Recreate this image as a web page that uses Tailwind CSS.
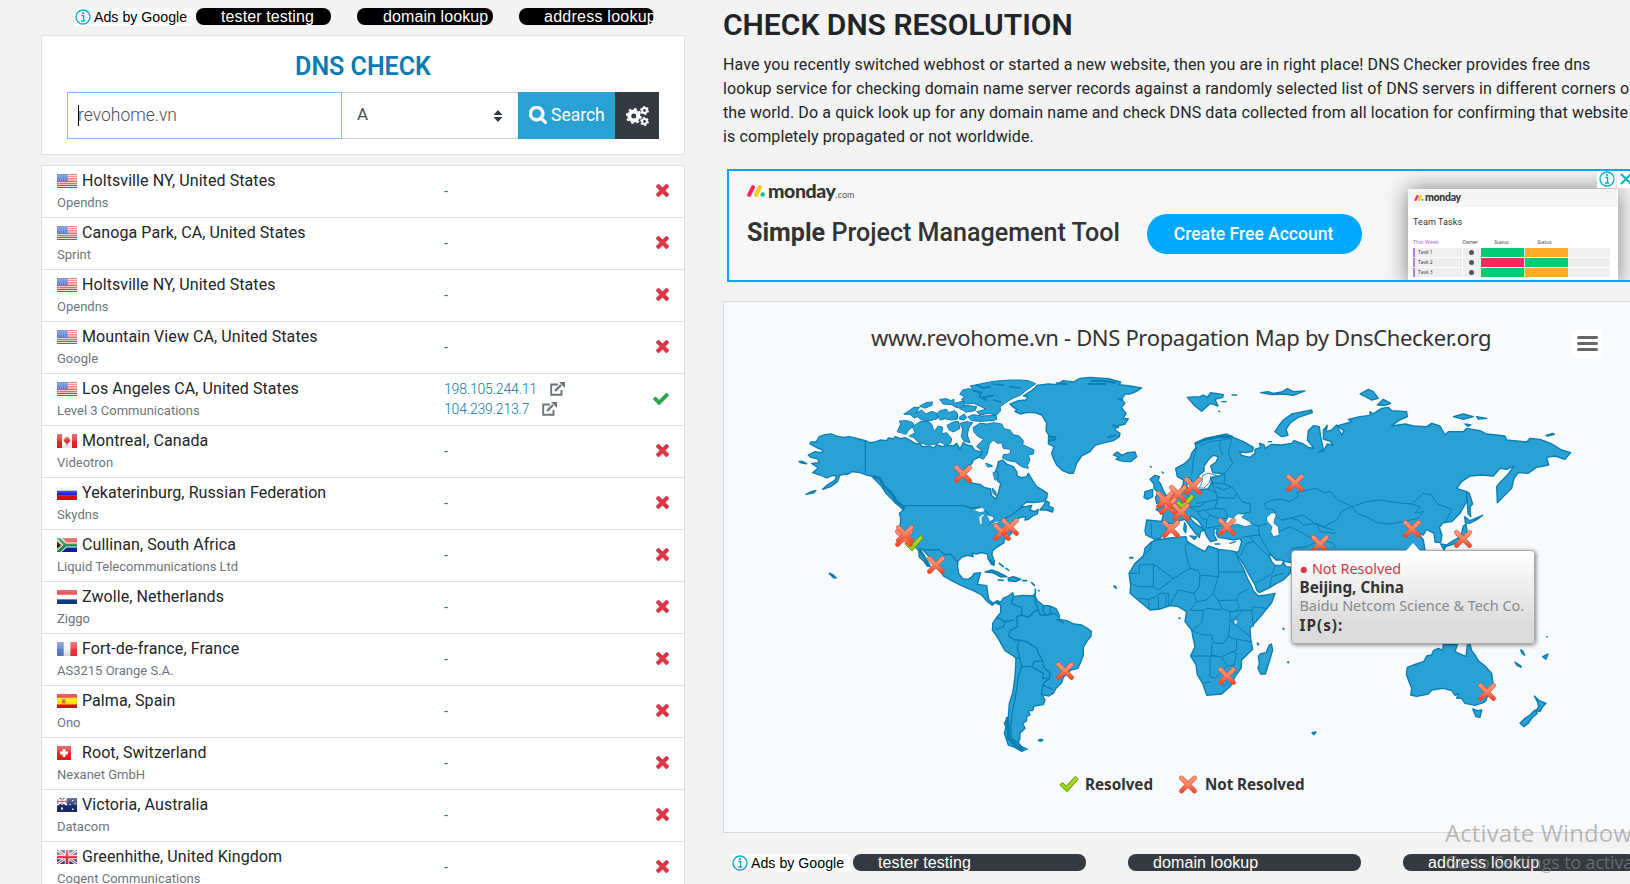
<!DOCTYPE html>
<html lang="en">
<head>
<meta charset="utf-8">
<title>DNS Check</title>
<script src="https://cdn.jsdelivr.net/npm/@tailwindcss/browser@4"></script>
</head>
<body class="relative h-[884px] w-[1630px] overflow-hidden bg-[#f3f3f3] font-['Roboto',sans-serif] text-[#212529]">
<svg class="absolute h-0 w-0">
  <defs>
    <linearGradient id="gx" gradientUnits="userSpaceOnUse" x1="0" y1="-8" x2="0" y2="8"><stop offset="0" stop-color="#ff9a78"/><stop offset=".5" stop-color="#fd8060"/><stop offset="1" stop-color="#ee4526"/></linearGradient>
    <linearGradient id="gc" x1="0" y1="0" x2="0" y2="1"><stop offset="0" stop-color="#b5d52a"/><stop offset="1" stop-color="#8fd400"/></linearGradient>
    <linearGradient id="shine" x1="0" y1="0" x2="0" y2="1"><stop offset="0" stop-color="#fff" stop-opacity=".35"/><stop offset=".5" stop-color="#fff" stop-opacity=".1"/><stop offset=".55" stop-color="#000" stop-opacity="0"/><stop offset="1" stop-color="#000" stop-opacity=".12"/></linearGradient>
  </defs>
  <symbol id="times" viewBox="302 238 1188 1188"><path fill="currentColor" d="M1490 1322q0 40-28 68l-136 136q-28 28-68 28t-68-28l-294-294-294 294q-28 28-68 28t-68-28l-136-136q-28-28-28-68t28-68l294-294-294-294q-28-28-28-68t28-68l136-136q28-28 68-28t68 28l294 294 294-294q28-28 68-28t68 28l136 136q28 28 28 68t-28 68l-294 294 294 294q28 28 28 68z" transform="translate(0 -128)"/></symbol>
  <symbol id="tick" viewBox="121 334 1550 1188"><path fill="currentColor" d="M1671 566q0 40-28 68l-724 724-136 136q-28 28-68 28t-68-28l-136-136-362-362q-28-28-28-68t28-68l136-136q28-28 68-28t68 28l294 295 656-657q28-28 68-28t68 28l136 136q28 28 28 68z"/></symbol>
  <symbol id="search" viewBox="64 128 1664 1664"><path fill="currentColor" d="M1216 832q0-185-131.500-316.500t-316.500-131.500-316.500 131.500-131.500 316.500 131.500 316.500 316.500 131.500 316.500-131.500 131.500-316.500zm512 832q0 52-38 90t-90 38q-54 0-90-38l-343-342q-179 124-399 124-143 0-273.500-55.500t-225-150-150-225-55.500-273.500 55.500-273.500 150-225 225-150 273.500-55.500 273.500 55.500 225 150 150 225 55.500 273.500q0 220-124 399l343 343q37 37 37 90z" stroke="currentColor" stroke-width="60"/></symbol>
  <symbol id="ext" viewBox="0 0 15 14"><path d="M8 2.500H1.200v10.300h10.300V8" fill="none" stroke="currentColor" stroke-width="1.900"/><path d="M5 9l6-6" stroke="currentColor" stroke-width="2.400"/><path d="M9 0h6v6z" fill="currentColor"/></symbol>
  <symbol id="cogs" viewBox="0 0 23 20"><g fill="none" stroke="currentColor"><circle cx="7.800" cy="10" r="4.500" stroke-width="4"/><circle cx="7.800" cy="10" r="7" stroke-width="2" stroke-dasharray="2.750 2.750"/><circle cx="18.500" cy="4.500" r="2.400" stroke-width="2"/><circle cx="18.500" cy="4.500" r="3.800" stroke-width="1.300" stroke-dasharray="1.990 1.990"/><circle cx="18.500" cy="15.500" r="2.400" stroke-width="2"/><circle cx="18.500" cy="15.500" r="3.800" stroke-width="1.300" stroke-dasharray="1.990 1.990"/></g></symbol>
  <symbol id="info" viewBox="0 0 16 16"><circle cx="8" cy="8" r="7" fill="#fff" stroke="#00aecd" stroke-width="1.300"/><path d="M6.200 6.500H8.600V12M6 12h4.300" stroke="#00aecd" stroke-width="1.300" fill="none"/><rect x="7.200" y="3.200" width="1.800" height="1.800" fill="#00aecd"/></symbol>
  <symbol id="mx" viewBox="-9 -9 18 18"><path d="M-6.500-6.500L6.500 6.500M6.500-6.500L-6.500 6.500" stroke="#d9523a" stroke-width="4.600" stroke-linecap="round"/><path d="M-6.500-6.500L6.500 6.500M6.500-6.500L-6.500 6.500" stroke="url(#gx)" stroke-width="3.600" stroke-linecap="round"/></symbol>
  <symbol id="mc" viewBox="0 0 20 18"><path d="M.8 10L3.300 7.500 7.300 11 16.500 1.200 19.200 4 8.200 16.800z" fill="url(#gc)" stroke="#5f9a10" stroke-width="1" stroke-linejoin="round"/></symbol>
  <symbol id="us" viewBox="0 0 20 14"><path fill="#fff" d="M0 0h20v14H0z"/><path stroke="#e8453c" stroke-width="1.150" d="M0 .6h20M0 2.750h20M0 4.900h20M0 7.050h20M0 9.200h20M0 11.350h20M0 13.500h20"/><path fill="#3b63c8" d="M0 0h10.500v7.500H0z"/><path stroke="#c5d4f7" stroke-width=".8" stroke-dasharray="1 1" d="M1 2h9M1.500 4h8M1 6h9"/></symbol>
  <symbol id="ca" viewBox="0 0 20 14"><path fill="#fff" d="M0 0h20v14H0z"/><path fill="#dd2c2c" d="M0 0h5v14H0zM15 0h5v14h-5zM10 2l1 2 1.500-.5-.3 2 1.500-.3-.3 1.500L11 9.500l-.7.200V12h-.6V9.700L9 9.500 6.600 6.700l-.3-1.500 1.500.3-.3-2L9 4z"/></symbol>
  <symbol id="ru" viewBox="0 0 20 14"><path fill="#f6f6f6" d="M0 0h20v5H0z"/><path fill="#1a2be0" d="M0 4.700h20v5H0z"/><path fill="#e3120b" d="M0 9.400h20V14H0z"/></symbol>
  <symbol id="za" viewBox="0 0 20 14"><path fill="#e8392c" d="M0 0h20v7H0z"/><path fill="#101ea8" d="M0 7h20v7H0z"/><path d="M0-1l8.500 8L0 15M8 7h12" stroke="#fff" stroke-width="5" fill="none"/><path d="M0-1l8.500 8L0 15M8 7h12" stroke="#1b8f4c" stroke-width="3" fill="none"/><path fill="#111" stroke="#e9b92e" stroke-width="1" d="M-1 2l5.500 5L-1 12z"/></symbol>
  <symbol id="nl" viewBox="0 0 20 14"><path fill="#e5212a" d="M0 0h20v5H0z"/><path fill="#fff" d="M0 4.700h20v5H0z"/><path fill="#0f3f8c" d="M0 9.400h20V14H0z"/></symbol>
  <symbol id="fr" viewBox="0 0 20 14"><path fill="#5b7fd0" d="M0 0h7v14H0z"/><path fill="#f4f4f4" d="M6.700 0h7v14h-7z"/><path fill="#e83a35" d="M13.400 0H20v14h-6.600z"/></symbol>
  <symbol id="es" viewBox="0 0 20 14"><path fill="#e81313" d="M0 0h20v14H0z"/><path fill="#ffe608" d="M0 3.700h20v6.800H0z"/><path fill="#d9752a" d="M5 5h3.500v4.500H5z"/></symbol>
  <symbol id="ch" viewBox="0 0 20 14"><path fill="#f02020" d="M0 0h14v14H0z"/><path fill="#fff" d="M5.500 3h3v2.500H11v3H8.500V11h-3V8.500H3v-3h2.500z"/></symbol>
  <symbol id="au" viewBox="0 0 20 14"><path fill="#1a2c72" d="M0 0h20v14H0z"/><path d="M0 0l10 7M10 0L0 7M5 0v7M0 3.500h10" stroke="#fff" stroke-width="1.800"/><path d="M5 0v7M0 3.500h10" stroke="#e0303a" stroke-width="1"/><path fill="#fff" d="M4 9.500h2v2H4zM15 2h1.300v1.300H15zM17.500 5h1.200v1.200h-1.200zM12.500 6h1.200v1.200h-1.200zM15 10.500h1.500V12H15z"/></symbol>
  <symbol id="gb" viewBox="0 0 20 14"><path fill="#2a4796" d="M0 0h20v14H0z"/><path d="M0 0l20 14M20 0L0 14" stroke="#fff" stroke-width="3"/><path d="M0 0l20 14M20 0L0 14" stroke="#e0303a" stroke-width="1"/><path d="M10 0v14M0 7h20" stroke="#fff" stroke-width="4.600"/><path d="M10 0v14M0 7h20" stroke="#e0303a" stroke-width="2.600"/></symbol>
</svg>

<div class="flex h-full">
  <!-- Left column -->
  <section class="ml-[41px] w-[644px] shrink-0">
    <div class="ml-[33px] flex h-[35px] pt-2 font-['Liberation_Sans',sans-serif] text-[16px] text-white">
      <div class="mr-[3px] flex h-[18px] w-[119px] items-center rounded-r bg-white pl-px pt-0.5 text-[14.200px] text-black"><svg class="-mt-0.5 mr-[3px] h-4 w-4"><use href="#info"/></svg><span class="whitespace-nowrap">Ads by Google</span></div>
      <div class="mr-[26px] h-[17px] w-[135px] overflow-hidden rounded-lg bg-black pl-[25px] leading-[17px] tracking-[.1px] whitespace-nowrap">tester testing</div>
      <div class="mr-[26px] h-[17px] w-[136px] overflow-hidden rounded-lg bg-black pl-[26px] leading-[17px] tracking-[.1px] whitespace-nowrap">domain lookup</div>
      <div class="h-[17px] w-[135px] rounded-lg bg-black pl-[25px] leading-[17px] tracking-[.25px] whitespace-nowrap">address lookup</div>
    </div>
    <div class="h-[120px] border border-[#dee2e6] bg-white px-[25px] pt-4">
      <h2 class="text-center text-[25px] font-semibold leading-[29px] text-[#0a7cb0]">DNS CHECK</h2>
      <div class="mt-[11px] flex h-[47px] text-[17.500px] font-light text-[#495057]">
        <div class="flex w-[275px] items-center border border-[#80bdff] pl-2.5"><i class="h-[21px] w-px bg-black"></i><span class="-ml-px">revohome.vn</span></div>
        <div class="flex w-[176px] items-center border-y border-[#ced4da] pl-[15px] pr-[15px] text-[17px]"><span class="-mt-px flex-1 font-normal">A</span><svg class="h-3 w-2.5" viewBox="0 0 10 12"><path fill="#343a40" d="M5 0l4.500 5h-9zM5 12L.5 7h9z"/></svg></div>
        <div class="flex w-[97px] items-center bg-[#2aa1d5] pl-[11px] font-normal text-white"><svg class="-mt-0.5 mr-1 h-[18px] w-[18px]"><use href="#search"/></svg><span class="-mt-px">Search</span></div>
        <div class="flex w-11 items-center justify-center bg-[#343a40] text-white"><svg class="h-5 w-[23px]"><use href="#cogs"/></svg></div>
      </div>
    </div>
    <div id="rows" class="mt-2.5 border border-[#dee2e6] bg-white"></div>
  </section>

  <!-- Right column -->
  <section class="relative ml-[38px] w-[907px] shrink-0">
    <h1 class="mt-1 h-[42px] whitespace-nowrap text-[30px] font-semibold leading-[42px]">CHECK DNS RESOLUTION</h1>
    <p class="mt-[7px] h-[116px] whitespace-nowrap text-[16px] leading-6 tracking-[.107px]">Have you recently switched webhost or started a new website, then you are in right place! DNS Checker provides free dns<br>lookup service for checking domain name server records against a randomly selected list of DNS servers in different corners of<br>the world. Do a quick look up for any domain name and check DNS data collected from all location for confirming that website<br>is completely propagated or not worldwide.</p>

    <div class="relative ml-1 h-[113px] w-[930px] overflow-hidden border-2 border-[#00a8ff] bg-[#f7f7f7] text-[#333]">
      <div class="ml-[18px] mt-2 flex h-6 items-center font-['Lato',sans-serif]">
        <svg class="mr-[3px] h-3 w-[18px]" viewBox="0 0 18 12"><path d="M2.200 9.800L6 2.200" stroke="#fb275d" stroke-width="4" stroke-linecap="round"/><path d="M9 9.800l3.800-7.600" stroke="#fc0" stroke-width="4" stroke-linecap="round"/><circle cx="15.700" cy="9.500" r="2.200" fill="#00ca72"/></svg>
        <span class="-mt-px text-[19.500px] font-black leading-6 tracking-[-.4px]">monday</span><span class="mt-2 text-[9px] leading-3 text-[#555]">.com</span>
      </div>
      <div class="ml-[18px] mt-[9px] whitespace-nowrap text-[25.100px] leading-[42px]"><b class="font-bold">Simple</b> <span class="font-medium">Project Management Tool</span></div>
      <div class="absolute left-[418px] top-[43px] flex h-10 w-[215px] items-center justify-center rounded-full bg-[#00a8ff] pr-0.5 text-[17.500px] font-medium text-white">Create Free Account</div>
      <div class="absolute left-[679px] top-[18px] h-24 w-[210px] bg-white shadow-[0_0_22px_rgba(0,0,0,.5)]">
        <div class="flex h-[18px] items-center bg-[#f5f5f5] pl-1.5">
          <svg class="h-1.5 w-[10px]" viewBox="0 0 18 12"><path d="M2.200 9.800L6 2.200" stroke="#fb275d" stroke-width="4.500" stroke-linecap="round"/><path d="M9 9.800l3.800-7.600" stroke="#fc0" stroke-width="4.500" stroke-linecap="round"/><circle cx="15.700" cy="9.500" r="2.200" fill="#00ca72"/></svg>
          <b class="-mt-0.5 ml-px font-['Lato',sans-serif] text-[10.500px] font-black leading-3 tracking-[-.3px]">monday</b></div>
        <div class="ml-[5px] mt-[7px] text-[9px] leading-4 tracking-[.1px]">Team Tasks</div>
        <div class="ml-[5px] mt-2 grid h-[9px] grid-cols-[47px_20px_43px_43px] text-center font-['Open_Sans',sans-serif] text-[5px] leading-[9px]"><span class="text-left text-[5.500px] text-[#a25ddc]">This Week</span><span>Owner</span><span>Status</span><span>Status</span></div>
        <div id="tasks" class="ml-[5px] mt-px flex w-[197px] flex-col gap-px font-['Open_Sans',sans-serif]"></div>
      </div>
      <div class="absolute right-[6px] -top-px flex h-[18px] w-[52px] gap-px"><span class="flex w-[19px] items-center justify-center bg-white"><svg class="h-4 w-4"><use href="#info"/></svg></span><span class="flex flex-1 items-center bg-white pl-[3px]"><svg class="h-3 w-3" viewBox="0 0 12 12"><path d="M1 1l10 10M11 1L1 11" stroke="#00aecd" stroke-width="2"/></svg></span></div>
    </div>

    <div class="relative mt-[19px] h-[532px] w-[930px] border border-[#d6dade] bg-[#f9fafc]">
      <div class="ml-[147px] mt-[19px] whitespace-nowrap font-['Noto_Sans',sans-serif] text-[22px] leading-8 tracking-[-.33px] text-[#333]">www.revohome.vn - DNS Propagation Map by DnsChecker.org</div>
      <div class="absolute left-[848px] top-[28px] flex h-[27px] w-[30px] flex-col items-center justify-center gap-[3px] rounded-sm bg-white"><i class="h-[3px] w-[21px] rounded bg-[#666]"></i><i class="h-[3px] w-[21px] rounded bg-[#666]"></i><i class="h-[3px] w-[21px] rounded bg-[#666]"></i></div>
      <div class="absolute left-[335px] top-[472px] flex items-center whitespace-nowrap font-['Noto_Sans',sans-serif] text-[15.200px] font-bold leading-5 text-[#333]"><svg class="mr-1.5 h-[18px] w-5"><use href="#mc"/></svg>Resolved<svg class="ml-[26px] mr-2 h-[19px] w-[18px]"><use href="#mx"/></svg><span class="-tracking-[.08px]">Not Resolved</span></div>
    </div>
    <div class="ml-2 mt-[21px] flex font-['Liberation_Sans',sans-serif] text-[16px] text-white">
      <div class="mr-[3px] flex h-[18px] w-[119px] shrink-0 items-center rounded-r bg-white pl-px pt-0.5 text-[14.200px] text-black"><svg class="-mt-0.5 mr-[3px] h-4 w-4"><use href="#info"/></svg><span class="whitespace-nowrap">Ads by Google</span></div>
      <div class="mr-[42px] h-[17px] w-[233px] shrink-0 rounded-lg bg-[#343a40] pl-[25px] leading-[17px] tracking-[.1px]">tester testing</div>
      <div class="mr-[42px] h-[17px] w-[233px] shrink-0 rounded-lg bg-[#343a40] pl-[25px] leading-[17px] tracking-[.1px]">domain lookup</div>
      <div class="h-[17px] w-[233px] shrink-0 rounded-lg bg-[#343a40] pl-[25px] leading-[17px] tracking-[.2px]">address lookup</div>
    </div>
  </section>
</div>

<!-- World map: units are thirds of a pixel -->
<svg class="absolute left-[780px] top-[320px] h-[450px] w-[850px]" viewBox="0 0 2550 1350" fill="#2aa1d5" stroke="#0a7db3" stroke-width="4" stroke-linejoin="round" stroke-linecap="round">
  <path d="M118 350L135 344 155 342 172 349 190 352 208 350 230 355 257 362 268 368 285 366 300 360 320 362 325 354 340 357 345 350 362 356 375 353 392 362 408 372 420 370 428 380 450 378 462 384 470 374 485 380 500 376 520 378 530 370 540 387 550 368 560 375 575 378 585 392 605 395 600 410 580 420 575 432 560 440 548 460 556 478 580 490 600 493 612 502 632 507 634 525 646 537 655 520 662 490 652 482 656 465 646 455 652 440 655 425 668 420 680 432 700 440 710 455 712 468 725 473 740 470 745 460 758 482 770 500 790 512 802 520 800 535 788 545 760 548 740 546 722 560 735 560 755 556 750 570 765 575 775 568 772 582 758 588 745 598 735 600 737 590 722 592 705 600 695 612 690 620 695 640 672 660 672 668 650 682 637 693 636 705 643 722 642 735 634 733 624 715 622 702 605 698 590 702 575 700 580 710 562 706 545 712 533 725 533 740 536 760 548 776 565 778 578 768 582 760 602 758 598 772 592 793 620 797 623 818 627 840 640 850 652 842 662 848 660 855 645 848 637 856 622 845 605 825 580 812 565 806 540 795 515 782 490 768 480 752 465 740 452 720 445 708 430 690 420 686 422 700 432 712 440 730 450 740 442 738 430 722 418 712 416 692 405 680 385 670 372 655 360 625 362 595 358 580 370 570 362 562 345 548 330 532 318 520 305 500 288 482 275 468 262 466 240 458 215 455 205 462 190 464 180 465 172 485 152 500 128 508 142 495 165 480 170 468 158 466 140 474 120 465 98 458 115 444 95 430 118 428 112 416 92 412 85 405 105 395 125 398 128 390 115 385 90 372 92 366 108 366z"/>
  <path d="M78 523l18-9 12-3-8 8z"/>
  <g stroke-width="3">
  <path d="M540 222L548 210 565 206 580 208 570 198 600 192 640 184 690 180 720 180 745 182 767 191 758 198 740 210 722 225 700 234 680 246 660 260 662 272 650 285 625 280 600 285 590 275 618 268 600 258 580 250 560 252 545 240 552 230z"/>
  <path d="M590 196l20 8 20-4M640 192l30 4M580 212l24 6-6 12 22 10M610 232l30-6M640 240l22 6M690 200l30 4" fill="none" stroke-width="5"/>
  <path d="M565 290L580 284 605 288 648 286 650 298 640 302 600 304 575 302z"/>
  <path d="M352 334L362 312 358 303 380 302 398 308 402 316 386 330 378 342z"/>
  <path d="M398 320L420 305 445 304 455 312 462 335 475 318 488 322 485 342 500 338 515 356 512 370 498 376 482 366 468 372 440 374 415 366 400 352 388 348 405 338z"/>
  <path d="M372 282L390 270 402 262 418 262 408 280 424 270 438 282 455 274 480 284 472 296 450 302 425 300 412 290 402 294 392 284z"/>
  <path d="M420 258L438 248 457 246 456 256 436 264z"/>
  <path d="M480 238L500 236 512 242 522 238 522 250 548 244 555 252 552 266 528 262 515 254 490 252z"/>
  <path d="M470 282L480 272 500 268 505 278 525 272 533 282 532 297 515 300 495 296 482 300z"/>
  <path d="M540 290L552 282 560 292 552 300 540 298z"/>
  <path d="M502 315L520 306 535 304 540 325 520 336 508 330z"/>
  <path d="M540 310L560 305 578 308 566 325 562 345 570 368 552 364 544 350 548 328z"/>
  <path d="M540 265L560 256 590 260 585 272 560 276z"/>
  <path d="M580 322L600 310 622 312 640 308 665 312 672 326 690 330 700 344 718 348 730 362 728 374 745 382 762 390 760 402 745 405 750 420 742 436 745 445 725 440 705 425 685 422 668 414 670 404 690 402 692 388 670 385 665 368 652 370 640 360 628 372 622 400 610 418 598 412 610 395 590 380 600 368 612 358 595 350 583 338z"/>
  <path d="M618 430l12 4 8 5-14 2zM640 458l12-4 4 18-10 8zM638 505l10 12 0 10-8-6z"/>
  </g>
  <path d="M797 542L808 548 806 558 820 564 818 576 800 570 780 570 790 558z"/>
  <path d="M58 425l10 0 12 6-14-2zM148 760l10 4 10 10-8-2z" stroke-width="5"/>
  <path d="M282 470L300 476 312 500 335 520 350 545 372 562" fill="none" stroke-width="9"/>
  <path d="M420 690L448 736" fill="none" stroke-width="8"/>
  <path d="M256 362V457M370 557H550L572 564 600 562 625 580 640 612 668 598 695 585 712 572 728 560M418 688L455 690 475 688 495 705 512 702 533 728" fill="none"/>
  <g fill="#f9fafc" stroke-width="2"><path d="M568 576L590 566 608 562 616 574 600 578 585 572zM600 614L596 592 608 582 616 584 606 592 606 612zM618 584L640 590 642 598 628 606 626 596zM624 614L650 604 664 600 650 610z"/></g>
  <path d="M690 252L715 242 738 240 742 230 730 228 750 215 767 202 770 196 805 192 830 194 850 182 880 186 900 175 930 172 985 176 1022 186 1018 194 1050 198 1085 204 1068 215 1050 222 1035 222 1025 238 1035 250 1024 262 1038 280 1030 295 1045 296 1035 312 1012 318 1005 330 1020 340 1018 350 1000 362 965 370 945 376 930 395 905 408 890 430 880 460 868 460 848 452 830 435 820 415 815 400 822 380 805 372 806 345 798 332 800 310 785 285 765 278 740 278 720 282 705 274 712 268 700 262z"/>
  <path d="M935 182h30l40 6M925 192h50M1000 316l15 6M1015 236l12 4M985 352l20-6M806 350l20 2M808 362l18-4M830 190l30 2" fill="none" stroke-width="6"/>
  <!-- Caribbean -->
  <g transform="translate(540 720)">
  <path d="M76 36L95 30 112 36 140 50 122 50 100 38zM145 55L160 50 182 58 168 64 146 62zM115 60l14 1M188 62h12M118 10l12 10M92 0l10 14M138 25l8 6M215 68l8 8M226 88v14M236 92h1M222 104l4-1M240 538l8 2-4 3-8-1zM462 78l4 3" stroke-width="5"/>
  <!-- South America -->
  <path d="M112 126L124 124 130 114 145 108 158 98 162 110 185 106 225 108 232 122 250 136 270 138 288 146 298 165 298 178 320 182 342 192 365 195 382 205 394 214 393 228 380 245 370 262 370 285 365 300 354 325 332 330 310 352 305 368 288 385 280 400 266 408 246 404 255 420 250 434 222 438 218 452 205 452 210 465 200 470 200 482 188 490 195 505 180 520 180 535 175 548 185 560 202 567 185 574 160 560 145 555 133 520 138 500 133 490 145 470 148 430 158 400 165 350 168 295 160 288 135 272 120 245 108 225 97 210 98 200 98 190 110 172 122 158 122 135z"/>
  <path d="M160 108L154 130 172 138 185 142 185 165 170 170 172 200M225 108L225 125 235 148 222 155 205 172 185 165M235 148L240 165 262 165 280 160 290 165M250 138L248 150 255 163M272 140L270 160M110 172L135 185 160 180M135 185L130 200 108 208M172 200L150 212 146 230 165 240 178 240 200 245 230 265 235 280 248 302 250 320 270 340 270 355 250 370 244 404M178 240L172 262 178 290 168 298M178 290L185 320 215 320 222 305 248 302M215 320L250 340 248 355 270 355M185 320L175 350 168 400 158 450 152 500 155 535 175 550M250 375L276 388M290 178L310 188" fill="none"/>
  <path d="M142 475l4 60 20 20 20 12" fill="none" stroke-width="10"/>
  </g>
  <g transform="translate(930 120)">
  <!-- Eurasia -->
  <path d="M257 325L285 310 300 295 306 278 318 262 315 250 335 244 355 235 385 227 410 222 430 232 460 245 490 262 487 274 470 278 448 276 455 286 480 292 495 280 495 268 512 262 508 250 522 254 525 265 545 253 575 255 605 250 612 242 640 252 655 262 672 265 652 240 655 212 670 197 688 200 692 230 698 258 700 268 685 276 700 273 712 252 730 255 720 243 700 237 700 210 712 196 708 215 725 210 740 195 755 225 762 212 742 198 785 185 775 178 810 170 840 166 840 155 848 162 875 145 895 142 905 152 950 155 952 170 925 182 905 198 945 192 970 198 1010 200 1025 190 1050 198 1065 225 1075 215 1120 215 1130 205 1170 212 1190 222 1245 228 1250 240 1310 246 1320 235 1350 238 1382 250 1415 270 1442 278 1425 298 1395 288 1370 292 1376 315 1340 322 1315 340 1285 338 1272 355 1265 385 1235 415 1222 428 1220 380 1232 365 1255 342 1272 318 1250 328 1230 325 1210 348 1175 345 1140 348 1115 365 1100 385 1130 395 1130 425 1110 460 1085 485 1060 488 1048 502 1056 525 1052 548 1035 546 1032 520 1010 508 1000 525 985 520 1000 540 1005 570 1000 620 800 700 640 640 604 608 585 605 572 600 558 600 540 582 538 588 545 605 555 616 575 616 580 606 588 620 605 622 600 640 580 660 560 670 540 682 508 698 500 690 495 675 475 640 460 612 438 580 447 572 455 545 450 536 430 540 405 535 385 532 378 518 384 505 372 508 372 525 380 540 362 545 350 528 340 505 325 482 305 468 300 474 315 490 345 510 332 514 328 532 318 522 300 498 285 478 268 482 250 492 232 488 228 515 210 535 195 538 168 525 165 512 170 480 215 484 220 462 198 448 218 440 240 425 250 405 268 395 280 372 280 360 290 365 292 385 330 390 355 386 365 368 362 355 405 342 368 338 362 318 378 306 385 290 370 286 358 296 342 318 342 334 327 345 322 370 310 378 300 352 280 360 262 350z"/>
  <path d="M318 250L345 238 385 230 425 230" fill="none" stroke-width="9"/>
  <g fill="#f9fafc" stroke-width="2.500"><path d="M408 484L414 470 430 474 440 462 466 460 456 472 475 482 490 494 465 500 440 492 420 498 408 498zM530 472L545 458 562 460 555 475 552 490 565 500 568 526 550 530 542 515 546 500 532 485zM338 346L356 340 380 346 362 352 358 368 342 384 328 384 336 366z"/></g>
  <path d="M320 262L310 300 305 345M330 258L360 245 395 240 425 236M392 240L388 260 398 285M425 236L415 280 428 310 405 338M362 368L405 372M362 350L370 380 378 398 382 420 350 425 320 430M405 342L402 372 425 380 440 400 432 415 382 412M355 388L378 398M425 380L400 390 378 380M440 400L455 425 480 432 482 455 455 462M382 420L375 445 405 448 412 470M350 425L330 440 300 440 298 420 290 395M300 440L320 455 345 450 375 445M325 458L335 475 350 480 360 465 345 450M360 465L385 475 412 475M350 480L348 505 378 500 408 490M300 440L280 450 262 440M215 484L240 492M183 490L185 528M482 490L505 498 508 525 480 528 455 532M505 498L530 492M508 525L525 555 540 582M480 528L490 545 470 550 452 585M490 545L520 575 538 588M555 616L548 640 500 668M580 640L545 650 540 680M525 430L545 420 575 418 600 425 625 408 620 398 675 385 705 398 720 395 745 420 785 440 755 455 740 480 700 500 680 490 640 495 625 480 600 475 575 480 560 470 552 450 530 445zM568 515L600 500 640 520 680 545 650 560 605 565M680 490L690 515 735 520M785 440L830 425 870 420 900 425 940 430 965 432 990 440 975 460 1000 455 985 475 940 485 900 492 860 488 830 470 805 462 785 440M965 432L1000 400 1025 405 1040 430 1085 448 1065 490M575 480L640 465 680 495 730 510M700 540l30 10 5 12" fill="none" stroke-width="3"/>
  <path d="M555 215L566 198 580 180 605 162 640 155 665 150 667 158 625 172 600 190 588 208 594 226 575 230z"/>
  <path d="M292 112L330 110 340 105 352 112 362 98 400 104 398 112 375 118 384 138 362 130 345 145 335 154 315 138 306 128zM512 98L535 95 550 100 575 96 592 86 610 95 645 93 610 106 580 102 545 104zM426 105h14M395 125h14M386 153l3 2M535 245h10" />
  <path d="M70 285L82 276 96 286 112 278 135 276 140 290 122 305 100 304 78 298 88 292z"/>
  <path d="M180 358L195 346 208 350 204 362 212 372 220 392 232 412 225 428 200 430 196 412 205 398 192 385 192 372zM162 412L165 395 188 388 188 410 172 418zM216 336l4 3M181 319l3 3M284 488l5 12-2 18-6-10zM300 528l20 2-6 8zM375 552h14M420 550l16-5" />
  <path d="M810 102L835 88 850 95 865 115 845 120zM862 135L880 118 902 130 885 136zM1090 170L1120 162 1150 170 1120 178zM1160 170l30 5-25 2zM1125 192l18 3-10 4zM1368 226l20-6 5 3-22 5z"/>
  <path d="M1130 395L1138 400 1148 432 1140 440 1142 470 1134 460zM1124 470L1140 482 1178 466 1155 482 1138 490 1126 488zM1128 492L1132 520 1115 545 1060 562 1085 545 1112 530 1120 498zM1052 552l18 3-8 15z"/>
  <!-- Africa -->
  <path d="M200 540L240 534 288 530 292 545 320 562 345 575 355 558 385 568 420 572 438 576 446 600 460 625 472 655 485 680 492 695 505 708 530 705 555 700 545 728 515 765 480 805 482 835 488 868 455 900 453 925 435 950 422 978 395 1002 350 1006 338 970 322 945 318 915 302 888 315 860 308 828 305 810 285 785 290 755 265 740 240 737 210 747 180 750 150 725 120 700 122 675 117 640 135 610 160 590 165 565 185 545z"/>
  <path d="M185 545L180 570 165 580 140 605M120 640H148V615L190 612 250 655 300 625 292 600 285 560 295 545M190 612V680H145L122 670M190 680L205 690 235 668 250 655M300 625L325 632 330 645 385 650V568M385 636H462M330 645L328 680 312 700 265 690 250 715 240 737M385 650L370 700 385 722 440 720 448 700 478 685M312 700L320 725 300 750M320 725L350 720 370 700M145 715L175 718 195 712 210 700 235 700M175 718L178 745M205 745V710M228 740V705M236 738V702M385 722L395 745 420 755 460 750 485 752 490 740 530 745 545 725M440 720L448 740 440 755M300 750L340 752 350 745 395 750M340 752L335 790 305 812M420 755V790L415 830 400 850 370 850 365 825 340 825 305 812M460 750L430 780M430 780H420L480 830M485 752L490 800M415 830L440 838 482 845M302 888H380L365 885V855M365 885L395 892 425 875 440 870 440 838M395 892L412 918 432 915 440 880 425 875M360 890V950M360 965L340 970 338 970M360 950L375 955 412 918M395 965l12-5 6 10-12 8zM432 915L435 940" fill="none" stroke-width="3"/>
  <path d="M432 780l10 0 0 10-8 4z" fill="#f9fafc" stroke-width="2"/>
  <path d="M505 890L510 882 528 878 538 855 544 852 548 870 538 905 526 942 512 942 504 925 508 910z"/>
  <path d="M120 593h8M75 680l3 4M268 775h1M503 850l2 4M580 806h1M594 907h1" stroke-width="6"/>
  </g>
  <!-- Australia and New Zealand -->
  <g transform="translate(1470 660)">
  <path d="M412 382L430 375 462 364 470 348 485 345 490 332 505 325 518 330 520 314 562 314 555 335 588 350 592 315 600 312 605 332 615 345 625 362 645 378 665 400 669 428 655 460 648 482 640 488 615 496 585 490 575 475 560 475 566 460 555 466 545 452 520 445 485 450 475 462 440 469 422 465 425 445 415 420 409 402z"/>
  <path d="M608 507L622 512 635 510 630 532 618 530zM793 468L808 482 828 490 818 500 810 515 798 512 806 500 802 485zM795 510L802 520 785 535 775 550 762 560 750 550 765 535 780 525zM752 330l6 2 6 14-8-6zM735 366l18 12 0 4-12-6zM818 350l16-8-6 16zM126 578l12-2-6 8zM40 266l1 1M54 367l1 1M830 290l2 1"/>
  </g>
</svg>
<div id="marks"></div>

<!-- Tooltip -->
<div class="absolute left-[1290.500px] top-[550px] h-[94px] w-[244px] rounded-sm border border-[#aaa] bg-linear-to-b from-white to-[#dcdcdc] to-80% pl-2 pt-[9px] font-['Noto_Sans',sans-serif] text-[14.400px] leading-[18.700px] whitespace-nowrap text-[#333] shadow-[1px_1px_4px_rgba(0,0,0,.5)]">
  <svg class="absolute -top-2 left-[113px] h-[9px] w-4" viewBox="0 0 16 9"><path d="M0 9L8 0l8 9" fill="#fff"/></svg>
  <div class="text-[#dc3545]">● Not Resolved</div>
  <div class="-mt-px mb-px text-[15.300px] font-bold">Beijing, China</div>
  <div class="text-[#888]">Baidu Netcom Science &amp; Tech Co.</div>
  <div class="text-[15.300px] font-bold tracking-[1px]">IP(s):</div>
</div>

<!-- Desktop watermark -->
<div class="absolute left-[1445px] top-[815px] whitespace-nowrap font-['Open_Sans',sans-serif] text-[#8e8e8e]/60">
  <div class="text-[24px] leading-9 tracking-[.1px]">Activate Windows</div>
  <div class="mt-px text-[17.600px] leading-5">Go to Settings to activate Windows.</div>
</div>

<script>
const rows = [
  ['us','Holtsville NY, United States','Opendns'],['us','Canoga Park, CA, United States','Sprint'],['us','Holtsville NY, United States','Opendns'],
  ['us','Mountain View CA, United States','Google'],['us','Los Angeles CA, United States','Level 3 Communications',['198.105.244.11','104.239.213.7']],
  ['ca','Montreal, Canada','Videotron'],['ru','Yekaterinburg, Russian Federation','Skydns'],['za','Cullinan, South Africa','Liquid Telecommunications Ltd'],
  ['nl','Zwolle, Netherlands','Ziggo'],['fr','Fort-de-france, France','AS3215 Orange S.A.'],['es','Palma, Spain','Ono'],
  ['ch','Root, Switzerland','Nexanet GmbH'],['au','Victoria, Australia','Datacom'],['gb','Greenhithe, United Kingdom','Cogent Communications']];
document.getElementById('rows').innerHTML = rows.map(([f,t,s,ips]) => `
  <div class="flex h-[52px] items-center border-b border-[#dee2e6] pl-[15px]">
    <div class="w-[387px] shrink-0 self-start pt-[3px]">
      <div class="flex h-6 items-center text-[16px] leading-6 tracking-[.08px]"><svg class="mr-[5px] h-3.5 w-5"><use href="#${f}"/><rect width="${f==='ch'?14:20}" height="14" fill="url(#shine)"/></svg><span class="whitespace-nowrap">${t}</span></div>
      <div class="text-[13px] leading-[19px] text-[#6c757d]">${s}</div>
    </div>
    <div class="-mt-0.5 w-[210px] shrink-0 text-[14px] leading-5 text-[#0a7cb0]">${ips ? ips.map(i=>`<div class="flex items-center font-light tracking-[-.18px]">${i}<svg class="ml-[13px] h-3.5 w-[15px] text-[#6c757d]"><use href="#ext"/></svg></div>`).join('') : '-'}</div>
    ${ips ? '<svg class="-ml-px -mt-0.5 h-3 w-4 text-[#28a745]"><use href="#tick"/></svg>' : '<svg class="ml-[2px] -mt-0.5 h-[13px] w-[13px] text-[#dc3545]"><use href="#times"/></svg>'}
  </div>`).join('');
document.getElementById('tasks').innerHTML = [['Task 1','#00ca72','#ffab2d'],['Task 2','#fb275d','#00ca72'],['Task 3','#00ca72','#ffab2d']].map(([t,a,b]) => `
  <div class="flex h-[9px] border-l-2 border-[#b57be3] bg-[#efefef] text-[5px] leading-[9px]"><span class="w-[47px] pl-[3px]">${t}</span><span class="flex w-[19px] items-center border-l border-white pl-[6px]"><i class="h-[5px] w-[5px] rounded-full bg-[#555]"></i></span><i class="w-[43px]" style="background:${a}"></i><i class="ml-px w-[43px]" style="background:${b}"></i></div>`).join('');
const marks = [[963,474],[914,543,1],[904,538],[905,534],[936,565],[1002,532],[1010,527],[1193,486],[1185,502,1],[1178,494],[1168,506],[1165,500],[1181,512],[1171,529],[1227,527],[1295,483],[1320,544],[1412,529],[1463,539],[1065,671],[1227,676],[1487,692]];
document.getElementById('marks').innerHTML = marks.map(([x,y,c]) => `<svg class="absolute h-[18px] w-[20px] -translate-x-1/2 -translate-y-1/2" style="left:${x}px;top:${y}px"><use href="#${c?'mc':'mx'}"/></svg>`).join('');
</script>
</body>
</html>
